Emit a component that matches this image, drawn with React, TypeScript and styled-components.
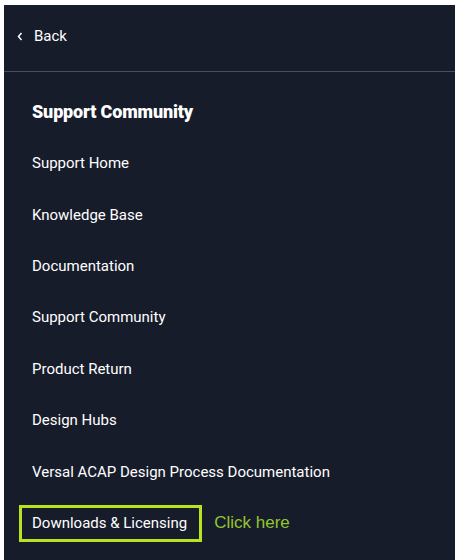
import React from "react";
import styled, { createGlobalStyle } from "styled-components";

const Global = createGlobalStyle`
  html, body { margin: 0; padding: 0; background: #ffffff; }
  body { padding: 5px 0 0 4px; height: 560px; box-sizing: border-box; overflow: hidden; }
  #root { height: 100%; }
`;

const Panel = styled.nav`
  background: #171c2b;
  height: 100%;
  display: flex;
  flex-direction: column;
  font-family: Roboto, "Liberation Sans", sans-serif;
  color: #ffffff;
`;

const Header = styled.div`
  height: 67px;
  display: flex;
  align-items: center;
  padding-left: 13px;
  gap: 11px;
  border-bottom: 1px solid #4a4e5d;
  font-size: 15px;
  font-weight: 400;
  padding-bottom: 4px;
  box-sizing: border-box;
`;

const List = styled.ul`
  list-style: none;
  margin: 0;
  padding: 14px 0 0 28px;
  display: flex;
  flex-direction: column;
`;

const Row = styled.li<{ $heading?: boolean }>`
  height: 51.43px;
  display: flex;
  align-items: center;
  font-size: ${(p) => (p.$heading ? "18px" : "15px")};
  font-weight: ${(p) => (p.$heading ? 900 : 400)};
  letter-spacing: ${(p) => (p.$heading ? "-0.15px" : "0")};
`;

const Highlight = styled.span`
  margin-left: -13px;
  border: 3px solid #b9e31c;
  padding: 6px 12px 7px 10px;
  line-height: 18px;
`;

const Hint = styled.span`
  margin-left: 12px;
  font-family: "Liberation Sans", Arial, sans-serif;
  font-size: 17px;
  font-weight: 400;
  color: #93c62f;
`;

const items = [
  "Support Home",
  "Knowledge Base",
  "Documentation",
  "Support Community",
  "Product Return",
  "Design Hubs",
  "Versal ACAP Design Process Documentation",
];

export default function App() {
  return (
    <>
      <Global />
      <Panel>
        <Header>
          <svg width="6" height="9" viewBox="0 0 6 9">
            <polyline points="4.5,1 1.5,4.5 4.5,8" fill="none" stroke="#fff" strokeWidth="1.5" />
          </svg>
          <span>Back</span>
        </Header>
        <List>
          <Row $heading>Support Community</Row>
          {items.map((t) => (
            <Row key={t}>{t}</Row>
          ))}
          <Row>
            <Highlight>Downloads &amp; Licensing</Highlight>
            <Hint>Click here</Hint>
          </Row>
        </List>
      </Panel>
    </>
  );
}
